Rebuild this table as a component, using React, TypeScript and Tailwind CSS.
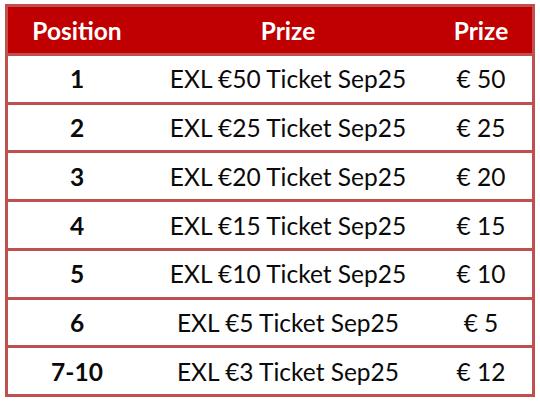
import React from "react";

const rows: [string, string, string][] = [
  ["1", "EXL €50 Ticket Sep25", "€ 50"],
  ["2", "EXL €25 Ticket Sep25", "€ 25"],
  ["3", "EXL €20 Ticket Sep25", "€ 20"],
  ["4", "EXL €15 Ticket Sep25", "€ 15"],
  ["5", "EXL €10 Ticket Sep25", "€ 10"],
  ["6", "EXL €5 Ticket Sep25", "€ 5"],
  ["7-10", "EXL €3 Ticket Sep25", "€ 12"],
];

export default function App() {
  return (
    <div className="w-[540px] h-[406px] bg-white pt-[4px] pl-[5px]" style={{ fontFamily: "Lato, 'Open Sans', sans-serif" }}>
      <div className="w-[530px] border-[3px] border-[#c0504d] flex flex-col">
        <div className="h-[45.75px] bg-[#c00000] flex items-center text-white font-bold text-[24.5px] pt-[2px]">
          <div className="w-[138px] text-center">Position</div>
          <div className="w-[284px] text-center">Prize</div>
          <div className="flex-1 text-center">Prize</div>
        </div>
        {rows.map(([p, n, v]) => (
          <div key={p} className="h-[48.75px] border-t-[3px] border-[#c0504d] flex items-center text-[#0a0a0a] text-[24.5px] pt-[2px]">
            <div className="w-[138px] text-center font-bold">{p}</div>
            <div className="w-[284px] text-center">{n}</div>
            <div className="flex-1 text-center">{v}</div>
          </div>
        ))}
      </div>
    </div>
  );
}
